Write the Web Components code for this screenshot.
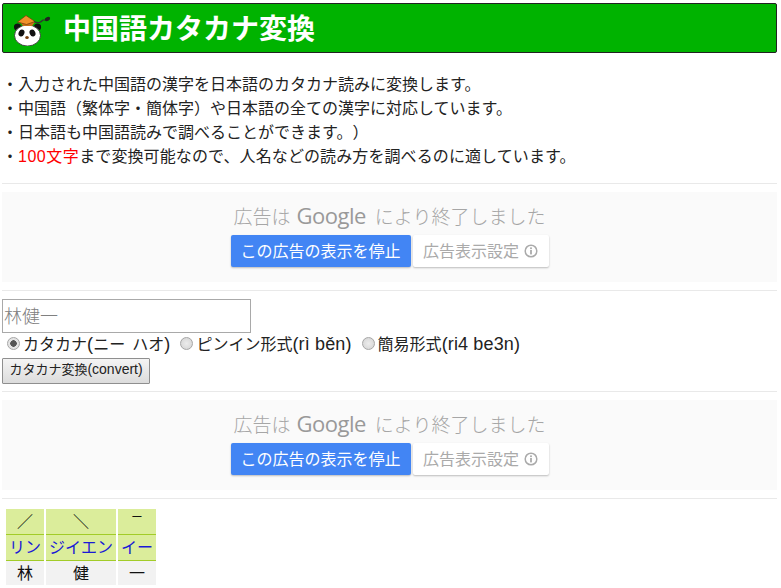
<!DOCTYPE html>
<html lang="ja">
<head>
<meta charset="utf-8">
<title>中国語カタカナ変換</title>
<style>
    html, body { margin: 0; padding: 0; background: #fff; }
    body {
        padding: 3px 4px 0 2px;
        font-family: "Liberation Sans", "Noto Sans CJK JP", sans-serif;
        font-size: 16px;
        color: #222;
        overflow: hidden;
        text-spacing-trim: space-all;
    }
</style>
</head>
<body>
<app-header>中国語カタカナ変換</app-header>
<intro-notes>
    <div>・入力された中国語の漢字を日本語のカタカナ読みに変換します。</div>
    <div>・中国語（繁体字・簡体字）や日本語の全ての漢字に対応しています。</div>
    <div>・日本語も中国語読みで調べることができます。）</div>
    <div>・<span style="color:#f00;letter-spacing:.5px">100文字</span><span style="letter-spacing:.1px">まで変換可能なので、人名などの読み方を調べるのに適しています。</span></div>
</intro-notes>
<page-rule></page-rule>
<ad-ended></ad-ended>
<page-rule></page-rule>
<convert-form></convert-form>
<page-rule></page-rule>
<ad-ended></ad-ended>
<page-rule></page-rule>
<reading-table></reading-table>

<script>
class AppHeader extends HTMLElement {
    constructor() {
        super();
        this.attachShadow({ mode: 'open' }).innerHTML = `
            <style>
                :host { display: flex; align-items: center; gap: 7px; height: 48px; padding-left: 11px;
                    background: #00b300; border: 1px solid #222; border-radius: 2px; }
                svg { flex: none; }
                h1 { margin: 3px 0 0; font-size: 28px; font-weight: bold; color: #fff; line-height: 1; }
            </style>
            <svg width="42" height="36" viewBox="0 0 42 36">
                <circle cx="3.5" cy="17" r="3.6" fill="#111"/>
                <circle cx="23.5" cy="17" r="3.6" fill="#111"/>
                <ellipse cx="13.5" cy="25.5" rx="13" ry="10.5" fill="#fff" stroke="#222" stroke-width=".8"/>
                <path d="M6 12 L9 16 L18 16 L21 12 Z" fill="#c9701a"/>
                <path d="M3.5 12 L12 5.5 L21 11.5 L12.5 14.5 Z" fill="#f0902a" stroke="#6e3c08" stroke-width=".7"/>
                <path d="M20 11.5 C25 14 27 12 29 10 L32 10" fill="none" stroke="#333" stroke-width="1.2"/>
                <ellipse cx="33.5" cy="9" rx="2.8" ry="1.9" fill="#222" transform="rotate(-25 33.5 9)"/>
                <ellipse cx="7.5" cy="23" rx="2.8" ry="3.6" fill="#111" transform="rotate(25 7.5 23)"/>
                <ellipse cx="18.5" cy="23" rx="2.8" ry="3.6" fill="#111" transform="rotate(-25 18.5 23)"/>
                <ellipse cx="13" cy="27.5" rx="1.8" ry="1.5" fill="#7a4210"/>
            </svg>
            <h1><slot></slot></h1>`;
    }
}

class IntroNotes extends HTMLElement {
    constructor() {
        super();
        this.attachShadow({ mode: 'open' }).innerHTML = `
            <style>
                :host { display: block; padding: 20px 0 14px; line-height: 24px; font-size: 16px; color: #222; }
            </style>
            <slot></slot>`;
    }
}

class PageRule extends HTMLElement {
    constructor() {
        super();
        this.attachShadow({ mode: 'open' }).innerHTML = `
            <style>
                :host { display: block; height: 1px; background: #e9e9e9; }
            </style>`;
    }
}

class AdEnded extends HTMLElement {
    constructor() {
        super();
        this.attachShadow({ mode: 'open' }).innerHTML = `
            <style>
                :host { display: flex; flex-direction: column; align-items: center; height: 90px; margin: 8px 0;
                    background: #fafafa; box-sizing: border-box; padding-top: 10px; color: #a6a6a6; }
                .msg { display: flex; align-items: center; height: 26px; font-size: 19px; font-weight: 300; white-space: nowrap; }
                .logo { font-family: "Open Sans", "Liberation Sans", sans-serif; font-size: 22px; font-weight: 500; color: #999; margin: 0 9px 0 6px; letter-spacing: -.5px; }
                .btns { display: flex; gap: 2px; margin-top: 7px; }
                .btn { height: 32px; display: flex; align-items: center; justify-content: center; font-size: 16px; padding-bottom: 2px;
                    border-radius: 2px; box-shadow: 0 1px 2px rgba(0,0,0,.25); box-sizing: border-box; }
                .stop { width: 180px; background: #4285f4; color: #fff; }
                .pref { width: 136px; background: #fff; color: #aaa; gap: 5px; }
                svg { flex: none; margin-top: 2px; }
            </style>
            <div class="msg">広告は<span class="logo">Google</span>により終了しました</div>
            <div class="btns">
                <div class="btn stop">この広告の表示を停止</div>
                <div class="btn pref">広告表示設定
                    <svg width="14" height="14" viewBox="0 0 14 14"><circle cx="7" cy="7" r="5.8" fill="none" stroke="#aaa" stroke-width="1.5"/><rect x="6.1" y="6" width="1.8" height="4.4" fill="#aaa"/><rect x="6.1" y="3.4" width="1.8" height="1.7" fill="#aaa"/></svg>
                </div>
            </div>`;
    }
}

class ConvertForm extends HTMLElement {
    constructor() {
        super();
        this.attachShadow({ mode: 'open' }).innerHTML = `
            <style>
                :host { display: block; padding: 8px 0 7px; font-size: 16px; color: #222; }
                input[type=text] { display: block; box-sizing: border-box; width: 249px; height: 34px; margin: 0; padding: 2px 1px 0;
                    border: 1px solid #a9a9a9; font: 300 18px "Liberation Sans", "Noto Sans CJK JP", sans-serif; }
                input[type=text]::placeholder { color: #808080; opacity: 1; }
                .opts { display: flex; height: 24px; align-items: center; padding: 0 0 4px 5px; box-sizing: border-box; white-space: nowrap; }
                label { display: flex; align-items: center; gap: 3px; margin-right: 10px; }
                label span { font-size: 18px; letter-spacing: .15px; }
                label .gap { letter-spacing: 2px; }
                input[type=radio] { appearance: none; width: 13px; height: 13px; margin: 0; border-radius: 50%;
                    border: 1px solid #a6a6a6; background: radial-gradient(circle, #ececec, #d2d2d2); box-sizing: border-box; }
                input[type=radio]:checked { background: radial-gradient(circle, #555 0 3px, #e4e4e4 3.5px); }
                button { display: block; box-sizing: border-box; width: 148px; height: 26px; margin: 1px 0 0; padding: 0 0 5px; color: #222;
                    border: 1px solid #8f8f8f; border-radius: 1px; background: linear-gradient(#f4f4f4, #dcdcdc);
                    font: 13px "Liberation Sans", "Noto Sans CJK JP", sans-serif; }
                button span { font-size: 14px; }
            </style>
            <input type="text" placeholder="林健一">
            <div class="opts">
                <label><input type="radio" name="fmt" checked><div>カタカナ<span>(</span>ニー<span class="gap"> </span>ハオ<span>)</span></div></label>
                <label><input type="radio" name="fmt"><div>ピンイン形式<span>(rì běn)</span></div></label>
                <label><input type="radio" name="fmt"><div>簡易形式<span>(ri4 be3n)</span></div></label>
            </div>
            <button>カタカナ変換<span>(convert)</span></button>`;
    }
}

class ReadingTable extends HTMLElement {
    constructor() {
        super();
        this.attachShadow({ mode: 'open' }).innerHTML = `
            <style>
                :host { display: block; padding: 10px 0 0 4px; }
                .grid { display: grid; grid-template-columns: 38px 70px 38px; column-gap: 2px; font-size: 16px; text-align: center; }
                .c { background: #dbed9b; }
                .tone { height: 25px; line-height: 25px; color: #111; border-bottom: 1px solid #a2cc28; }
                .tone.flat { line-height: 30px; font-weight: bold; }
                .kana { height: 25px; line-height: 25px; color: #1a1ad6; border-bottom: 1px solid #a2cc28; white-space: nowrap; }
                .han { height: 24px; line-height: 25px; background: #f2f2f2; color: #111; }
            </style>
            <div class="grid">
                <div class="c tone">／</div><div class="c tone">＼</div><div class="c tone flat">¯</div>
                <div class="c kana">リン</div><div class="c kana">ジイエン</div><div class="c kana">イー</div>
                <div class="han">林</div><div class="han">健</div><div class="han">一</div>
            </div>`;
    }
}

customElements.define('app-header', AppHeader);
customElements.define('intro-notes', IntroNotes);
customElements.define('page-rule', PageRule);
customElements.define('ad-ended', AdEnded);
customElements.define('convert-form', ConvertForm);
customElements.define('reading-table', ReadingTable);
</script>
</body>
</html>
